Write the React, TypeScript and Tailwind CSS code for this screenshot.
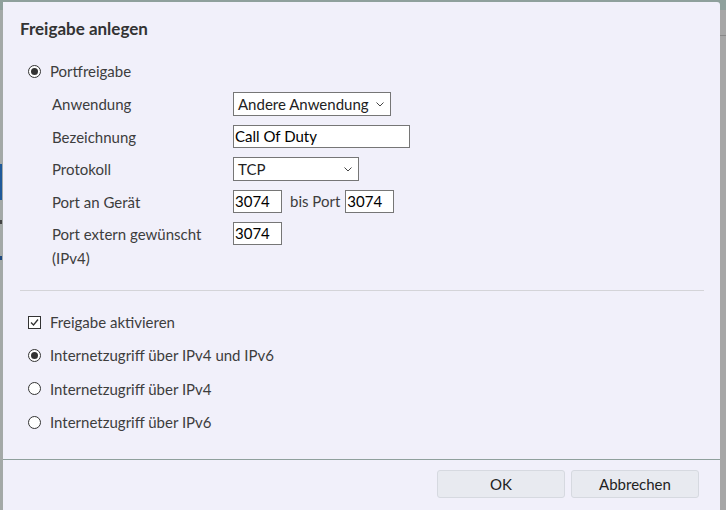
import React from 'react';

const font = { fontFamily: 'Lato, "Open Sans", sans-serif' };

const Radio = ({ checked }: { checked?: boolean }) => (
  <span className="flex h-[13px] w-[13px] shrink-0 items-center justify-center rounded-full border border-[#333] bg-white">
    {checked && <span className="h-[7px] w-[7px] rounded-full bg-[#333]" />}
  </span>
);

const Checkbox = () => (
  <span className="flex h-[13px] w-[13px] shrink-0 items-center justify-center border border-[#333] bg-white">
    <svg width="11" height="11" viewBox="0 0 11 11" fill="none" stroke="#333" strokeWidth="1.3">
      <path d="M2 5.5 L4.5 8 L9 2.5" />
    </svg>
  </span>
);

const Chevron = () => (
  <svg width="8" height="5" viewBox="0 0 8 5" fill="none" stroke="#444" strokeWidth="1">
    <path d="M0.5 0.5 L4 4 L7.5 0.5" />
  </svg>
);

const Select = ({ value, width }: { value: string; width: string }) => (
  <div className={`flex h-[24px] items-center justify-between border border-[#767676] bg-white pl-[4px] pr-[6px] text-[15px] text-[#222] ${width}`}>
    <span>{value}</span>
    <Chevron />
  </div>
);

const Input = ({ value, width }: { value: string; width: string }) => (
  <div className={`flex h-[23px] items-center border border-[#767676] bg-white pl-[1px] text-[15px] text-black ${width}`}>
    {value}
  </div>
);

const Row = ({ label, children }: { label: React.ReactNode; children: React.ReactNode }) => (
  <div className="flex min-h-[32.5px] items-start pl-[49px]">
    <div className="w-[181px] pt-[5px] leading-[24px]">{label}</div>
    <div className="flex items-center pt-[5px]">{children}</div>
  </div>
);

export default function App() {
  return (
    <div className="relative h-[510px] w-[726px] overflow-hidden bg-[#8fa09c]" style={font}>
      {/* page behind the dialog */}
      <div className="absolute left-0 top-[10px] h-[500px] w-[3px] bg-[#a4a9a7]" />
      <div className="absolute left-0 top-[164px] h-[36px] w-[2px] bg-[#1f5a9a]" />
      <div className="absolute left-0 top-[220px] h-[4px] w-[2px] bg-[#444]" />
      <div className="absolute left-0 top-[256px] h-[4px] w-[2px] bg-[#1f4a80]" />
      <div className="absolute right-0 top-[10px] h-[500px] w-[6px] bg-[#a6a6a6]">
        <div className="mt-[25px] h-px w-full bg-[#888]" />
      </div>

      <div className="absolute left-[3px] top-[2px] flex h-[530px] w-[717px] flex-col rounded-tr-[3px] bg-[#f1f0fa] text-[15px] text-[#3d3d3d]">
        <div className="pl-[17px] pt-[16px] text-[17px] font-bold leading-[22px] text-[#333]">Freigabe anlegen</div>

        <div className="mt-[19px] flex h-[24px] items-center gap-[9px] pl-[25px]">
          <Radio checked />
          <span>Portfreigabe</span>
        </div>

        <div className="mt-[4px] flex flex-col">
          <Row label="Anwendung">
            <Select value="Andere Anwendung" width="w-[158px]" />
          </Row>
          <Row label="Bezeichnung">
            <Input value="Call Of Duty" width="w-[177px]" />
          </Row>
          <Row label="Protokoll">
            <Select value="TCP" width="w-[126px]" />
          </Row>
          <Row label="Port an Gerät">
            <Input value="3074" width="w-[49px]" />
            <span className="ml-[8px] mr-[5px]">bis Port</span>
            <Input value="3074" width="w-[49px]" />
          </Row>
          <Row
            label={
              <>
                Port extern gewünscht
                <br />
                (IPv4)
              </>
            }
          >
            <Input value="3074" width="w-[49px]" />
          </Row>
        </div>

        <div className="ml-[17px] mr-[16px] mt-[20px] h-px bg-[#d4d4d8]" />

        <div className="mt-[19px] flex flex-col gap-[9.4px] pl-[25px]">
          <div className="flex h-[24px] items-center gap-[9px]">
            <Checkbox />
            <span>Freigabe aktivieren</span>
          </div>
          <div className="flex h-[24px] items-center gap-[9px]">
            <Radio checked />
            <span>Internetzugriff über IPv4 und IPv6</span>
          </div>
          <div className="flex h-[24px] items-center gap-[9px]">
            <Radio />
            <span>Internetzugriff über IPv4</span>
          </div>
          <div className="flex h-[24px] items-center gap-[9px]">
            <Radio />
            <span>Internetzugriff über IPv6</span>
          </div>
        </div>

        <div className="mt-[25px] h-px bg-[#8fa09c]" />

        <div className="flex justify-end gap-[6px] pr-[21px] pt-[10px]">
          <button className="h-[28px] w-[128px] rounded-[3px] border border-[#d6d9e0] bg-[#e8eaf0] text-[15px] text-[#222]">OK</button>
          <button className="h-[28px] w-[128px] rounded-[3px] border border-[#d6d9e0] bg-[#e8eaf0] text-[15px] text-[#222]">Abbrechen</button>
        </div>
      </div>
    </div>
  );
}
